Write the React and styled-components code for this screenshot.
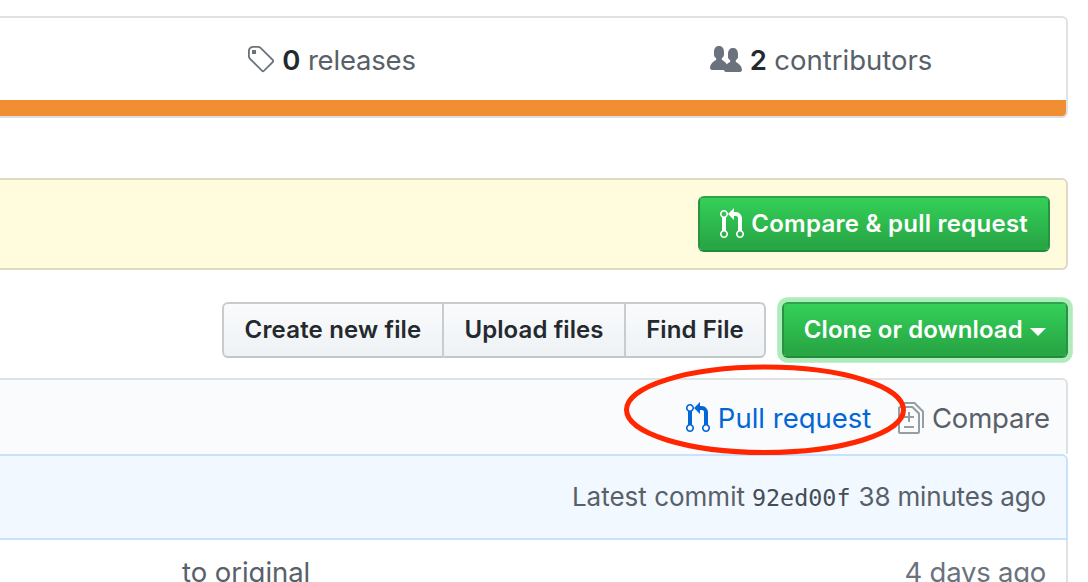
import React from "react";
import styled, { createGlobalStyle } from "styled-components";

const GlobalStyle = createGlobalStyle`
  * { box-sizing: border-box; }
  body { margin: 0; background: #fff; overflow: hidden; }
`;

const Page = styled.main`
  width: 1088px;
  height: 582px;
  overflow: hidden;
  position: relative;
  display: flex;
  flex-direction: column;
  padding: 16px 20px 0 0;
  font-family: Inter, "Liberation Sans", sans-serif;
  color: #586069;
`;

const Icon = styled.svg`
  flex: none;
  display: block;
  fill: currentColor;
  width: ${(p) => p.$width}px;
  height: 32px;
`;

const Text = styled.span`
  white-space: pre;
  letter-spacing: ${(p) => p.$tracking || 0}px;
`;

const Summary = styled.section`
  flex: none;
  height: 102px;
  border: 2px solid #dfe2e5;
  border-bottom-color: #dddddf;
  border-left: 0;
  border-radius: 0 6px 6px 0;
  overflow: hidden;
  display: flex;
  flex-direction: column;
`;

const Stats = styled.div`
  flex: 1;
  display: grid;
  grid-template-columns: 86px 490px 490px;
`;

const Stat = styled.div`
  display: flex;
  align-items: center;
  justify-content: center;
  font-size: 27.5px;
  line-height: 42px;
  padding-top: 2px;
`;

const StatIcon = styled.span`
  color: #6a737d;
  margin-right: 8px;
`;

const Count = styled.strong`
  color: #24292e;
  font-weight: 600;
  margin-right: 7.5px;
`;

const LanguageBar = styled.div`
  height: 16px;
  background: #f18e33;
`;

const Banner = styled.section`
  flex: none;
  margin-top: 60px;
  height: 92px;
  background: #fffbdd;
  border: 2px solid #dfd8c2;
  border-left: 0;
  border-radius: 0 6px 6px 0;
  display: flex;
  align-items: center;
  justify-content: flex-end;
  padding-right: 16px;
`;

const Button = styled.button`
  flex: none;
  width: ${(p) => p.$width}px;
  height: 56px;
  margin: 0;
  padding: 0;
  display: flex;
  align-items: center;
  justify-content: center;
  font: 600 24px/40px Inter, "Liberation Sans", sans-serif;
  color: #24292e;
  background: #eff3f6 linear-gradient(180deg, #fafbfc, #eff3f6 90%) border-box;
  border: 2px solid #c8cccf;
  border-bottom-color: #c2c8c9;
`;

const PrimaryButton = styled(Button)`
  color: #fff;
  background: #28a745 linear-gradient(180deg, #34d058, #28a745 90%) padding-box;
  border-color: #2ea44c #289343 #248a3c;
  border-radius: 6px;
  box-shadow: ${(p) => (p.$focused ? "0 0 0 4.8px #aeecbc" : "none")};
`;

const ButtonIcon = styled.span`
  margin-right: 7.4px;
`;

const Caret = styled.span`
  margin: 3px 0 0 7.4px;
  border: 8px solid transparent;
  border-top-color: #fff;
  border-bottom-width: 0;
`;

const Actions = styled.div`
  flex: none;
  margin-top: 32px;
  display: flex;
  justify-content: flex-end;
  gap: 16px;
`;

const ButtonGroup = styled.div`
  display: flex;
  ${Button} + ${Button} { border-left: 0; }
  ${Button}:first-child { border-radius: 6px 0 0 6px; }
  ${Button}:last-child { border-radius: 0 6px 6px 0; }
`;

const BranchBar = styled.section`
  flex: none;
  margin-top: 20px;
  height: 76px;
  background: #fafbfc;
  border: 2px solid #dfe2e5;
  border-width: 2px 2px 0 0;
  border-radius: 0 6px 0 0;
  display: flex;
  align-items: center;
  justify-content: flex-end;
  gap: 26.4px;
  padding: 2px 16px 0 0;
  font-size: 27.5px;
`;

const BranchLink = styled.a`
  display: flex;
  align-items: center;
  gap: 8.2px;
  color: ${(p) => (p.$active ? "#0366d6" : "#586069")};
`;

const FadedIcon = styled.span`
  color: #959da5;
`;

const CommitBar = styled.section`
  flex: none;
  height: 86px;
  background: #f1f8ff;
  border: 2px solid #c8e1ff;
  border-left: 0;
  border-radius: 0 6px 0 0;
  display: flex;
  align-items: center;
  justify-content: flex-end;
  padding: 0 20px 1px 0;
  font-size: 26px;
`;

const Sha = styled.code`
  font: 23.4px/30px "DejaVu Sans Mono", monospace;
  color: #444d56;
  margin: 2px 8px 0 7px;
`;

const FileRow = styled.div`
  flex: none;
  height: 64px;
  border-right: 2px solid #dfe2e5;
  display: flex;
  justify-content: space-between;
  padding: 12px 20px 0 182px;
  font-size: 27.5px;
  line-height: 40px;
`;

const Age = styled(Text)`
  color: #6a737d;
`;

const Highlight = styled.svg`
  position: absolute;
  left: 620px;
  top: 360px;
  width: 290px;
  height: 100px;
  pointer-events: none;
`;

const TagIcon = () => (
  <Icon $width={28} viewBox="0 0 14 16">
    <path fillRule="evenodd" d="M7.73 1.73C7.26 1.26 6.62 1 5.96 1H3.5C2.13 1 1 2.13 1 3.5v2.47c0 .66.27 1.3.73 1.77l6.06 6.06c.39.39 1.02.39 1.41 0l4.59-4.59a.996.996 0 000-1.41L7.73 1.73zM2.38 7.09c-.31-.3-.47-.7-.47-1.13V3.5c0-.88.72-1.59 1.59-1.59h2.47c.42 0 .83.16 1.13.47l6.14 6.13-4.73 4.73-6.13-6.15zM3.01 3h2v2H3V3h.01z" />
  </Icon>
);

const PeopleIcon = () => (
  <Icon $width={32} viewBox="0 0 16 16">
    <path fillRule="evenodd" d="M16 12.999c0 .439-.45 1-1 1H7.995c-.539 0-.994-.447-.995-.999H1c-.54 0-1-.561-1-1 0-2.634 3-4 3-4s.229-.409 0-1c-.841-.621-1.058-.59-1-3 .058-2.419 1.367-3 2.5-3s2.442.58 2.5 3c.058 2.41-.159 2.379-1 3-.229.59 0 1 0 1s1.549.711 2.42 2.088C9.196 9.369 10 8.999 10 8.999s.229-.409 0-1c-.841-.62-1.058-.59-1-3 .058-2.419 1.367-3 2.5-3s2.437.581 2.495 3c.059 2.41-.158 2.38-1 3-.229.59 0 1 0 1s3.005 1.366 3.005 4" />
  </Icon>
);

const PullRequestIcon = () => (
  <Icon $width={24} viewBox="0 0 12 16">
    <path fillRule="evenodd" d="M11 11.28V5c-.03-.78-.34-1.47-.94-2.06C9.46 2.35 8.78 2.03 8 2H7V0L4 3l3 3V4h1c.27.02.48.11.69.31.21.2.3.42.31.69v6.28A1.993 1.993 0 0010 15a1.993 1.993 0 001-3.72zm-1 2.92c-.66 0-1.2-.55-1.2-1.2 0-.65.55-1.2 1.2-1.2.65 0 1.2.55 1.2 1.2 0 .65-.55 1.2-1.2 1.2zM4 3c0-1.11-.89-2-2-2a1.993 1.993 0 00-1 3.72v6.56A1.993 1.993 0 002 15a1.993 1.993 0 001-3.72V4.72c.59-.34 1-.98 1-1.72zm-.8 10c0 .66-.55 1.2-1.2 1.2-.65 0-1.2-.55-1.2-1.2 0-.65.55-1.2 1.2-1.2.65 0 1.2.55 1.2 1.2zM2 4.2C1.34 4.2.8 3.65.8 3c0-.65.55-1.2 1.2-1.2.65 0 1.2.55 1.2 1.2 0 .65-.55 1.2-1.2 1.2z" />
  </Icon>
);

const DiffIcon = () => (
  <Icon $width={26} viewBox="0 0 13 16">
    <path fillRule="evenodd" d="M6 7h2v1H6v2H5V8H3V7h2V5h1v2zm-3 6h5v-1H3v1zM7.5 2L11 5.5V15c0 .55-.45 1-1 1H1c-.55 0-1-.45-1-1V3c0-.55.45-1 1-1h6.5zM10 6L7 3H1v12h9V6zM8.5 0H3v1h5l4 4v8h1V4.5L8.5 0z" />
  </Icon>
);

export default function App() {
  return (
    <Page>
      <GlobalStyle />
      <Summary>
        <Stats>
          <span />
          <Stat>
            <StatIcon><TagIcon /></StatIcon>
            <Count>0</Count>
            <Text $tracking={-0.2}>releases</Text>
          </Stat>
          <Stat>
            <StatIcon><PeopleIcon /></StatIcon>
            <Count>2</Count>
            <Text>contributors</Text>
          </Stat>
        </Stats>
        <LanguageBar />
      </Summary>

      <Banner>
        <PrimaryButton $width={352}>
          <ButtonIcon><PullRequestIcon /></ButtonIcon>
          <Text $tracking={0.26}>Compare &amp; pull request</Text>
        </PrimaryButton>
      </Banner>

      <Actions>
        <ButtonGroup>
          <Button $width={222}><Text $tracking={0.17}>Create new file</Text></Button>
          <Button $width={182}><Text $tracking={0.1}>Upload files</Text></Button>
          <Button $width={140}><Text $tracking={0.08}>Find File</Text></Button>
        </ButtonGroup>
        <PrimaryButton $width={286} $focused>
          <Text $tracking={0.08}>Clone or download</Text>
          <Caret />
        </PrimaryButton>
      </Actions>

      <BranchBar>
        <BranchLink $active>
          <PullRequestIcon />
          <Text>Pull request</Text>
        </BranchLink>
        <BranchLink>
          <FadedIcon><DiffIcon /></FadedIcon>
          <Text $tracking={-0.15}>Compare</Text>
        </BranchLink>
      </BranchBar>

      <CommitBar>
        <Text>Latest commit</Text>
        <Sha>92ed00f</Sha>
        <Text $tracking={-0.17}>38 minutes ago</Text>
      </CommitBar>

      <FileRow>
        <Text $tracking={-0.05}>to original</Text>
        <Age $tracking={-0.25}>4 days ago</Age>
      </FileRow>

      <Highlight viewBox="0 0 290 100">
        <ellipse cx="145" cy="49.8" rx="138.5" ry="42.7" fill="none" stroke="#ff2600" strokeWidth="5" />
      </Highlight>
    </Page>
  );
}
